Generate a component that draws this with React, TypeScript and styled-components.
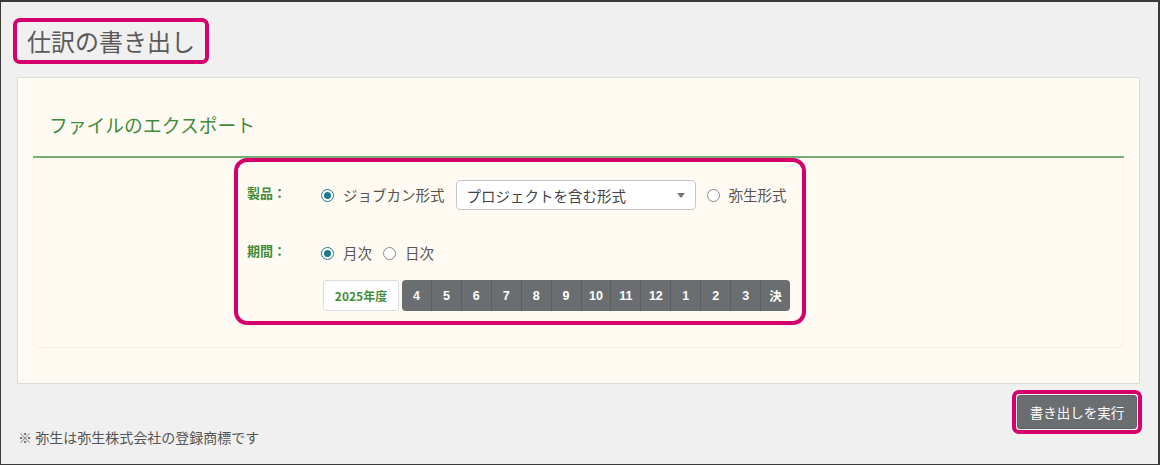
import React, { useState } from 'react';
import styled, { createGlobalStyle } from 'styled-components';

const GlobalStyle = createGlobalStyle`
    html, body {
        margin: 0;
        padding: 0;
        background: #f0f0f0;
    }
    body {
        font-family: "Noto Sans CJK JP", "Noto Sans", "Liberation Sans", sans-serif;
        color: #555;
        overflow: hidden;
    }
    * {
        box-sizing: border-box;
    }
`;

const MONTHS = ['4', '5', '6', '7', '8', '9', '10', '11', '12', '1', '2', '3', '決'];

const App = () => {
    const [format, setFormat] = useState<'jobcan' | 'yayoi'>('jobcan');
    const [period, setPeriod] = useState<'monthly' | 'daily'>('monthly');

    return (
        <>
            <GlobalStyle />
            <Frame>
                <Page>
                    <Highlight>
                        <Title>仕訳の書き出し</Title>
                    </Highlight>

                    <Card>
                        <CardHeader>
                            <CardTitle>ファイルのエクスポート</CardTitle>
                        </CardHeader>
                        <Panel>
                            <FormBox>
                                <FormRow>
                                    <FieldLabel>製品：</FieldLabel>
                                    <Controls>
                                        <RadioOption onClick={() => setFormat('jobcan')}>
                                            <RadioMark $checked={format === 'jobcan'} />
                                            <OptionText>ジョブカン形式</OptionText>
                                        </RadioOption>
                                        <FakeSelect>
                                            <span>プロジェクトを含む形式</span>
                                            <Caret />
                                        </FakeSelect>
                                        <RadioOption onClick={() => setFormat('yayoi')}>
                                            <RadioMark $checked={format === 'yayoi'} />
                                            <OptionText>弥生形式</OptionText>
                                        </RadioOption>
                                    </Controls>
                                </FormRow>

                                <FormRow $gapTop={28}>
                                    <FieldLabel>期間：</FieldLabel>
                                    <Controls>
                                        <RadioOption onClick={() => setPeriod('monthly')}>
                                            <RadioMark $checked={period === 'monthly'} />
                                            <OptionText>月次</OptionText>
                                        </RadioOption>
                                        <RadioOption onClick={() => setPeriod('daily')}>
                                            <RadioMark $checked={period === 'daily'} />
                                            <OptionText>日次</OptionText>
                                        </RadioOption>
                                    </Controls>
                                </FormRow>

                                <FormRow $gapTop={12}>
                                    <FieldLabel />
                                    <PeriodBar>
                                        <YearButton type="button">2025年度</YearButton>
                                        <MonthGroup>
                                            {MONTHS.map((m) => (
                                                <MonthButton key={m} type="button">
                                                    {m}
                                                </MonthButton>
                                            ))}
                                        </MonthGroup>
                                    </PeriodBar>
                                </FormRow>
                            </FormBox>
                        </Panel>
                    </Card>

                    <Footer>
                        <Note>※ 弥生は弥生株式会社の登録商標です</Note>
                        <ButtonHighlight>
                            <ExportButton type="button">書き出しを実行</ExportButton>
                        </ButtonHighlight>
                    </Footer>
                </Page>
            </Frame>
        </>
    );
};

export default App;

// Styled Components
const PINK = '#d6006c';
const GREEN = '#3f8d3a';

const Frame = styled.div`
    width: 1160px;
    height: 465px;
    border: 1px solid #3a3a3a;
    border-right-width: 2px;
    border-top-width: 2px;
    background: #f0f0f0;
    overflow: hidden;
`;

const Page = styled.div`
    padding: 16px 18px 0 16px;
`;

const Highlight = styled.div`
    display: inline-block;
    margin-left: -4px;
    border: 4px solid ${PINK};
    border-radius: 7px;
    padding: 0 10px 0 10px;
`;

const Title = styled.h1`
    margin: 0;
    font-size: 24px;
    font-weight: 400;
    line-height: 38px;
    color: #5a5a5a;
`;

const Card = styled.section`
    margin-top: 13px;
    height: 307px;
    background: #fffaf2;
    border: 1px solid #dadada;
    padding: 15px 15px 0;
`;

const CardHeader = styled.div`
    height: 65px;
    display: flex;
    align-items: center;
    padding: 0 16px;
    border-bottom: 2px solid #76b073;
`;

const CardTitle = styled.h2`
    margin: 0;
    font-size: 18.8px;
    font-weight: 400;
    color: ${GREEN};
    line-height: 24px;
`;

const Panel = styled.div`
    height: 190px;
    border: 1px solid #f6f1e7;
    border-top: none;
    border-radius: 0 0 6px 6px;
    padding-left: 200px;
`;

const FormBox = styled.div`
    width: 572px;
    border: 4px solid ${PINK};
    border-radius: 13px;
    padding: 18px 0 10px 9px;
`;

const FormRow = styled.div<{ $gapTop?: number }>`
    display: flex;
    align-items: center;
    margin-top: ${(p) => p.$gapTop ?? 0}px;
    min-height: 30px;
`;

const FieldLabel = styled.div`
    width: 74px;
    flex-shrink: 0;
    font-size: 13px;
    font-weight: 700;
    color: ${GREEN};
    line-height: 20px;
    padding-bottom: 4px;
`;

const Controls = styled.div`
    display: flex;
    align-items: center;
    gap: 11px;
`;

const RadioOption = styled.label`
    display: flex;
    align-items: center;
    gap: 9px;
    cursor: pointer;
`;

const RadioMark = styled.span<{ $checked: boolean }>`
    width: 13px;
    height: 13px;
    border-radius: 50%;
    border: 1px solid ${(p) => (p.$checked ? '#1d7c8a' : '#8a8a8a')};
    background: #fff;
    display: flex;
    align-items: center;
    justify-content: center;

    &::after {
        content: '';
        width: 7px;
        height: 7px;
        border-radius: 50%;
        background: ${(p) => (p.$checked ? '#1d7c8a' : 'transparent')};
    }
`;

const OptionText = styled.span`
    font-size: 14.5px;
    line-height: 20px;
    color: #555;
`;

const FakeSelect = styled.div`
    width: 240px;
    height: 30px;
    display: flex;
    align-items: center;
    justify-content: space-between;
    padding: 0 10px 0 10px;
    background: #fff;
    border: 1px solid #c6c6c6;
    border-radius: 4px;
    font-size: 14.5px;
    color: #444;
`;

const Caret = styled.span`
    width: 0;
    height: 0;
    border-left: 4px solid transparent;
    border-right: 4px solid transparent;
    border-top: 5px solid #777;
`;

const PeriodBar = styled.div`
    display: flex;
    align-items: stretch;
    gap: 3px;
    margin-left: 2px;
    height: 31px;
`;

const YearButton = styled.button`
    width: 76px;
    background: #fff;
    border: 1px solid #dcdcdc;
    border-radius: 3px;
    color: ${GREEN};
    font-family: inherit;
    font-size: 12px;
    font-weight: 700;
    padding: 0;
    cursor: pointer;
`;

const MonthGroup = styled.div`
    display: flex;
    width: 388px;
    background: #6b6e71;
    border-radius: 4px;
    overflow: hidden;
`;

const MonthButton = styled.button`
    flex: 1;
    background: transparent;
    border: none;
    border-left: 1px solid #5b5e61;
    color: #fff;
    font-family: "Liberation Sans", "Noto Sans CJK JP", sans-serif;
    font-size: 12.5px;
    font-weight: 700;
    padding: 0;
    cursor: pointer;

    &:first-child {
        border-left: none;
    }
`;

const Footer = styled.div`
    display: flex;
    justify-content: space-between;
    align-items: flex-end;
    margin-top: 6px;
`;

const Note = styled.p`
    margin: 0 0 -13px 1px;
    font-size: 14px;
    line-height: 20px;
    color: #555;
`;

const ButtonHighlight = styled.div`
    border: 4px solid ${PINK};
    border-radius: 7px;
    padding: 0 1px;
    margin-right: -2px;
    height: 44px;
    display: flex;
    align-items: center;
`;

const ExportButton = styled.button`
    width: 120px;
    height: 34px;
    background: #6b6e71;
    border: 1px solid #5f6265;
    border-radius: 3px;
    color: #fff;
    font-family: inherit;
    font-size: 13.5px;
    padding: 0;
    cursor: pointer;
`;
